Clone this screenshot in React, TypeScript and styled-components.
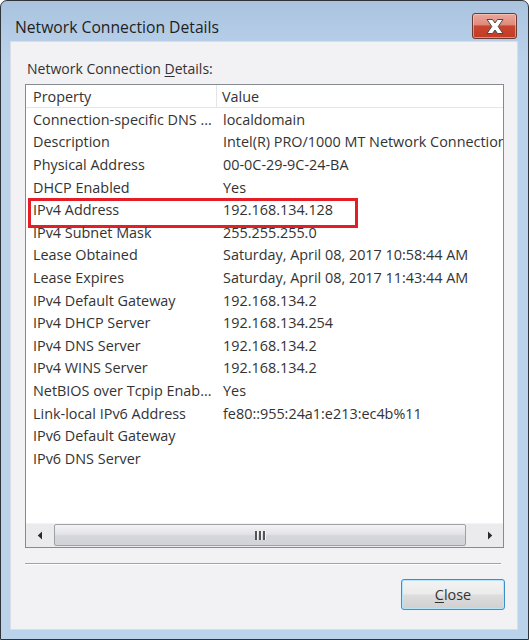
import React from "react";
import styled, { createGlobalStyle, css } from "styled-components";

const FONT = `"Segoe UI", "Open Sans", "Liberation Sans", sans-serif`;

const Global = createGlobalStyle`
  html, body { margin: 0; padding: 0; background: #ffffff; }
  body { font-family: ${FONT}; -webkit-font-smoothing: antialiased; }
  * { box-sizing: border-box; }
`;

const Window = styled.div`
  width: 529px;
  height: 640px;
  border: 1px solid #30343a;
  border-radius: 7px 7px 0 0;
  background: linear-gradient(180deg, #a9c3de 0px, #b3cbe5 30px, #bad2ea 60px, #bad2ea 100%);
  display: flex;
  flex-direction: column;
  overflow: hidden;
`;

const TitleBar = styled.div`
  height: 40px;
  display: flex;
  align-items: flex-start;
  justify-content: space-between;
  padding: 0 11px 0 14px;
`;

const Title = styled.div`
  margin-top: 16px;
  font-size: 15.7px;
  line-height: 20px;
  color: #1e1e1e;
`;

const CloseX = styled.div`
  margin-top: 12px;
  width: 45px;
  height: 26px;
  border: 1px solid #6a3a34;
  border-radius: 3px;
  background: linear-gradient(180deg, #eaa89c 0%, #df8a7a 45%, #c9452f 50%, #c43b25 100%);
  display: flex;
  align-items: center;
  justify-content: center;
  box-shadow: inset 0 0 0 1px rgba(255, 210, 200, 0.55);
`;

const Panel = styled.div`
  flex: 1;
  margin: 0 10px 9px 9px;
  background: #f2f1f4;
  border: 1px solid #d8dde6;
  display: flex;
  flex-direction: column;
  padding: 17px 0 0 0;
`;

const Label = styled.div`
  padding-left: 16px;
  font-size: 14px;
  line-height: 20px;
  color: #333333;
  u { text-decoration: underline; text-underline-offset: 2px; }
`;

const ListBox = styled.div`
  margin: 5px 0 0 14px;
  width: 479px;
  height: 464px;
  border: 1px solid #868a92;
  background: #ffffff;
  display: flex;
  flex-direction: column;
  overflow: hidden;
`;

const HeaderRow = styled.div`
  height: 23px;
  flex: none;
  display: grid;
  grid-template-columns: 191px 1fr;
  border-bottom: 1px solid #e3e5e9;
  font-size: 14.4px;
  color: #333333;
`;

const HeaderCell = styled.div<{ $divider?: boolean }>`
  display: flex;
  align-items: center;
  padding-left: ${(p) => (p.$divider ? "7px" : "5px")};
  ${(p) =>
    p.$divider &&
    css`
      border-right: 1px solid #e3e5e9;
    `}
`;

const Body = styled.div`
  flex: 1;
  padding-top: 0;
  overflow: hidden;
`;

const Row = styled.div<{ $marked?: boolean }>`
  position: relative;
  height: 22.6px;
  display: grid;
  grid-template-columns: 191px 1fr;
  align-items: center;
  font-size: 14.4px;
  color: #333333;
  white-space: nowrap;
  ${(p) =>
    p.$marked &&
    css`
      &::after {
        content: "";
        position: absolute;
        left: 2px;
        top: 0px;
        width: 324px;
        height: 24px;
        border: 3px solid #e41e26;
      }
    `}
`;

const Cell = styled.div<{ $first?: boolean }>`
  overflow: hidden;
  padding-left: ${(p) => (p.$first ? "7px" : "6px")};
`;

const HScroll = styled.div`
  height: 24px;
  flex: none;
  display: flex;
  align-items: stretch;
  background: #ebebee;
  border-top: 1px solid #f3f3f5;
`;

const ArrowBtn = styled.div`
  width: 27px;
  flex: none;
  display: flex;
  align-items: center;
  justify-content: center;
`;

const Thumb = styled.div<{ $w: number }>`
  width: ${(p) => p.$w}px;
  flex: none;
  margin: 0 0 1px 1px;
  border: 1px solid #9ea0a6;
  border-radius: 2px;
  background: linear-gradient(180deg, #f3f3f5 0%, #e3e3e8 45%, #d5d5dc 55%, #d2d2d9 100%);
  display: flex;
  align-items: center;
  justify-content: center;
`;

const Track = styled.div`
  flex: 1;
`;

const Separator = styled.div`
  margin: 15px 16px 0 14px;
  height: 1px;
  background: #a3a3a6;
  box-shadow: 0 1px 0 #ffffff;
`;

const Footer = styled.div`
  display: flex;
  justify-content: flex-end;
  padding: 15px 12px 0 0;
`;

const Button = styled.div`
  width: 104px;
  height: 31px;
  border: 1px solid #3c8fc8;
  border-radius: 3px;
  background: linear-gradient(180deg, #f3f3f3 0%, #ebebeb 48%, #dddddd 52%, #d0d0d0 100%);
  box-shadow: inset 0 0 0 1px #b6e6fb;
  display: flex;
  align-items: center;
  justify-content: center;
  font-size: 14.4px;
  color: #333333;
  u { text-decoration: underline; text-underline-offset: 2px; }
`;

const rows: [string, string][] = [
  ["Connection-specific DNS ...", "localdomain"],
  ["Description", "Intel(R) PRO/1000 MT Network Connection"],
  ["Physical Address", "00-0C-29-9C-24-BA"],
  ["DHCP Enabled", "Yes"],
  ["IPv4 Address", "192.168.134.128"],
  ["IPv4 Subnet Mask", "255.255.255.0"],
  ["Lease Obtained", "Saturday, April 08, 2017 10:58:44 AM"],
  ["Lease Expires", "Saturday, April 08, 2017 11:43:44 AM"],
  ["IPv4 Default Gateway", "192.168.134.2"],
  ["IPv4 DHCP Server", "192.168.134.254"],
  ["IPv4 DNS Server", "192.168.134.2"],
  ["IPv4 WINS Server", "192.168.134.2"],
  ["NetBIOS over Tcpip Enab...", "Yes"],
  ["Link-local IPv6 Address", "fe80::955:24a1:e213:ec4b%11"],
  ["IPv6 Default Gateway", ""],
  ["IPv6 DNS Server", ""],
];

const XGlyph = () => (
  <svg width="22" height="17" viewBox="0 0 22 17">
    <path
      d="M3 1.5 L8.5 1.5 L11 5 L13.5 1.5 L19 1.5 L14.2 8.5 L19 15.5 L13.5 15.5 L11 12 L8.5 15.5 L3 15.5 L7.8 8.5 Z"
      fill="#ffffff"
      stroke="#4a4a4a"
      strokeWidth="1"
      strokeLinejoin="round"
    />
  </svg>
);

const LeftTri = () => (
  <svg width="6" height="9" viewBox="0 0 6 9">
    <path d="M5 0.5 L0.8 4.5 L5 8.5 Z" fill="#2a2a2a" />
  </svg>
);

const RightTri = () => (
  <svg width="6" height="9" viewBox="0 0 6 9">
    <path d="M1 0.5 L5.2 4.5 L1 8.5 Z" fill="#2a2a2a" />
  </svg>
);

const Grip = () => (
  <svg width="11" height="9" viewBox="0 0 11 9">
    <rect x="0" y="0" width="2" height="9" fill="#555" />
    <rect x="4" y="0" width="2" height="9" fill="#555" />
    <rect x="8" y="0" width="2" height="9" fill="#555" />
    <rect x="2" y="0" width="1" height="9" fill="#fff" opacity="0.7" />
    <rect x="6" y="0" width="1" height="9" fill="#fff" opacity="0.7" />
    <rect x="10" y="0" width="1" height="9" fill="#fff" opacity="0.7" />
  </svg>
);

export default function App() {
  return (
    <>
      <Global />
      <Window>
        <TitleBar>
          <Title>Network Connection Details</Title>
          <CloseX>
            <XGlyph />
          </CloseX>
        </TitleBar>
        <Panel>
          <Label>
            Network Connection <u>D</u>etails:
          </Label>
          <ListBox>
            <HeaderRow>
              <HeaderCell $divider>Property</HeaderCell>
              <HeaderCell>Value</HeaderCell>
            </HeaderRow>
            <Body>
              {rows.map(([k, v]) => (
                <Row key={k} $marked={k === "IPv4 Address"}>
                  <Cell $first>{k}</Cell>
                  <Cell>{v}</Cell>
                </Row>
              ))}
            </Body>
            <HScroll>
              <ArrowBtn>
                <LeftTri />
              </ArrowBtn>
              <Thumb $w={412}>
                <Grip />
              </Thumb>
              <Track />
              <ArrowBtn>
                <RightTri />
              </ArrowBtn>
            </HScroll>
          </ListBox>
          <Separator />
          <Footer>
            <Button>
              <u>C</u>lose
            </Button>
          </Footer>
        </Panel>
      </Window>
    </>
  );
}
